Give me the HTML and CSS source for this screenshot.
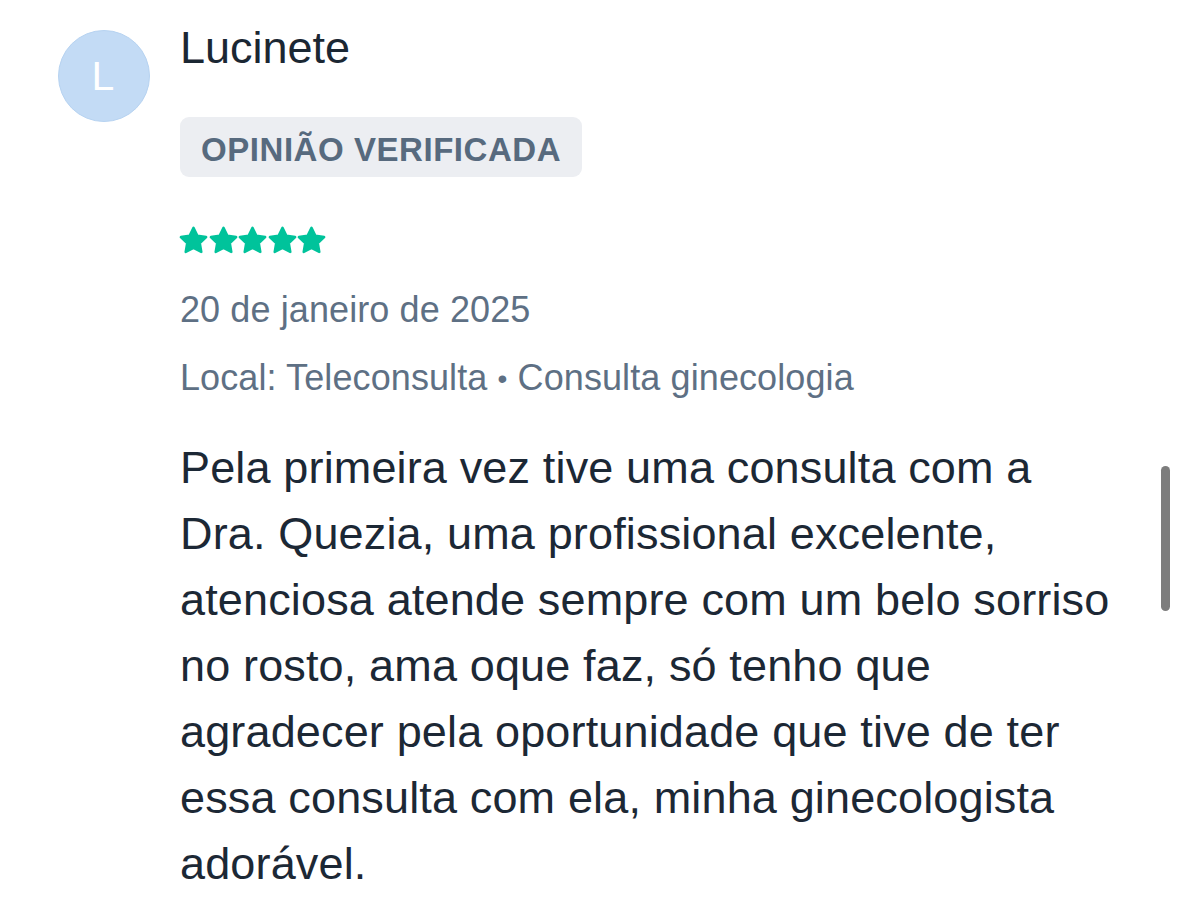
FILE: index.html
```html
<!DOCTYPE html>
<html lang="pt-BR">
<head>
<meta charset="utf-8">
<title>Opinião</title>
<link rel="stylesheet" href="styles.css">
</head>
<body>
<div class="review">
  <div class="avatar">L</div>
  <div class="content">
    <div class="name">Lucinete</div>
    <div class="badge">OPINIÃO VERIFICADA</div>
    <div class="stars">
      <svg class="star" viewBox="0.5 0.5 23 23" width="29" height="29"><polygon points="12,2 15.09,8.26 22,9.27 17,14.14 18.18,21.02 12,17.77 5.82,21.02 7,14.14 2,9.27 8.91,8.26"/></svg>
      <svg class="star" viewBox="0.5 0.5 23 23" width="29" height="29"><polygon points="12,2 15.09,8.26 22,9.27 17,14.14 18.18,21.02 12,17.77 5.82,21.02 7,14.14 2,9.27 8.91,8.26"/></svg>
      <svg class="star" viewBox="0.5 0.5 23 23" width="29" height="29"><polygon points="12,2 15.09,8.26 22,9.27 17,14.14 18.18,21.02 12,17.77 5.82,21.02 7,14.14 2,9.27 8.91,8.26"/></svg>
      <svg class="star" viewBox="0.5 0.5 23 23" width="29" height="29"><polygon points="12,2 15.09,8.26 22,9.27 17,14.14 18.18,21.02 12,17.77 5.82,21.02 7,14.14 2,9.27 8.91,8.26"/></svg>
      <svg class="star" viewBox="0.5 0.5 23 23" width="29" height="29"><polygon points="12,2 15.09,8.26 22,9.27 17,14.14 18.18,21.02 12,17.77 5.82,21.02 7,14.14 2,9.27 8.91,8.26"/></svg>
    </div>
    <div class="meta date">20 de janeiro de 2025</div>
    <div class="meta">Local: Teleconsulta <span class="dot">•</span> Consulta ginecologia</div>
    <p class="text">Pela primeira vez tive uma consulta com a Dra. Quezia, uma profissional excelente, atenciosa atende sempre com um belo sorriso no rosto, ama oque faz, só tenho que agradecer pela oportunidade que tive de ter essa consulta com ela, minha ginecologista adorável.</p>
  </div>
</div>
<div class="scroll-indicator"></div>
</body>
</html>
```

FILE: styles.css
```css
html, body {
  margin: 0;
  padding: 0;
  background: #ffffff;
  height: 100%;
  overflow: hidden;
}

body {
  font-family: "Liberation Sans", Arial, Helvetica, sans-serif;
  position: relative;
}

.review {
  display: flex;
  align-items: flex-start;
  gap: 30px;
  padding-left: 58px;
}

.avatar {
  flex: 0 0 auto;
  width: 90px;
  height: 90px;
  margin-top: 30px;
  border-radius: 50%;
  background: #c3dbf5;
  border: 1px solid #b7d3f1;
  color: #ffffff;
  font-size: 41px;
  line-height: 90px;
  text-align: center;
  text-indent: -2px;
}

.content {
  display: flex;
  flex-direction: column;
  align-items: flex-start;
  padding-top: 21px;
  width: 940px;
}

.name {
  font-size: 45px;
  line-height: 54px;
  color: #1b2733;
}

.badge {
  margin-top: 42px;
  height: 60px;
  box-sizing: border-box;
  padding: 6px 21px 0 21px;
  background: #eceef2;
  border-radius: 9px;
  font-size: 33px;
  line-height: 54px;
  font-weight: 700;
  letter-spacing: 0.55px;
  color: #576a7e;
}

.stars {
  margin-top: 49px;
  display: flex;
  gap: 0.5px;
  height: 29px;
  margin-left: -1px;
}

.star {
  display: block;
  fill: #00c39b;
  stroke: #00c39b;
  stroke-width: 2;
  stroke-linejoin: round;
}

.meta {
  font-size: 36px;
  line-height: 68px;
  color: #5e7084;
  letter-spacing: 0.1px;
}

.dot {
  font-size: 28px;
  vertical-align: 2px;
}

.date {
  margin-top: 21px;
}

.text {
  margin: 22px 0 0 0;
  font-size: 45px;
  line-height: 66px;
  color: #1c2835;
  letter-spacing: 0.15px;
}

.scroll-indicator {
  position: absolute;
  left: 1161px;
  top: 466px;
  width: 9px;
  height: 145px;
  border-radius: 5px;
  background: #7d7d7d;
}
```
